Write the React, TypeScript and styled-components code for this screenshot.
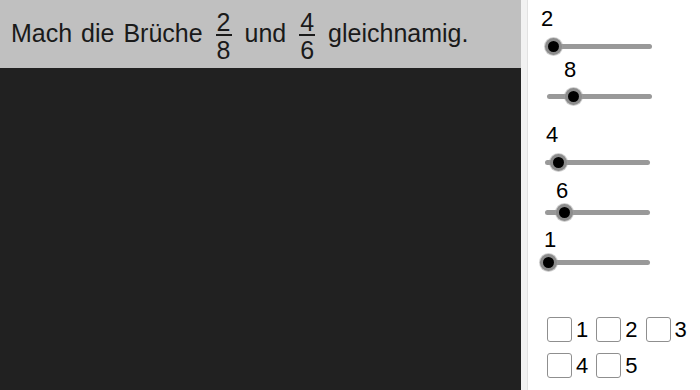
import React from "react";
import styled, { createGlobalStyle } from "styled-components";

const GlobalStyle = createGlobalStyle`
  html, body {
    margin: 0;
    padding: 0;
    background: #ffffff;
  }
  body {
    font-family: "Liberation Sans", Arial, sans-serif;
  }
`;

const sliders = [
  { value: "2", top: 8, labelX: 13, gap: 7, trackX: 20, width: 104, knob: 5 },
  { value: "8", top: 4, labelX: 36, gap: 6, trackX: 19, width: 105, knob: 26 },
  { value: "4", top: 19, labelX: 18, gap: 7, trackX: 17, width: 105, knob: 13 },
  { value: "6", top: 9, labelX: 28, gap: 1, trackX: 17, width: 105, knob: 19 },
  { value: "1", top: 8, labelX: 16, gap: 2, trackX: 12, width: 110, knob: 8 },
];

const boxRows = [
  ["1", "2", "3"],
  ["4", "5"],
];

const Fraction = ({ num, den }: { num: string; den: string }) => (
  <Frac>
    <Num>{num}</Num>
    <Bar />
    <Den>{den}</Den>
  </Frac>
);

const App = () => {
  return (
    <Page>
      <GlobalStyle />
      <GraphicsView>
        <TaskBar>
          <TaskText>
            Mach die Brüche <Fraction num="2" den="8" /> und{" "}
            <Fraction num="4" den="6" /> gleichnamig.
          </TaskText>
        </TaskBar>
        <Canvas />
      </GraphicsView>
      <Splitter />
      <SidePanel>
        {sliders.map((s) => (
          <SliderBlock key={s.value + s.top} $top={s.top}>
            <SliderLabel $x={s.labelX}>{s.value}</SliderLabel>
            <TrackRow $x={s.trackX} $w={s.width} $gap={s.gap}>
              <Track />
              <Knob $at={s.knob} />
            </TrackRow>
          </SliderBlock>
        ))}
        <BoxGrid>
          {boxRows.map((row, i) => (
            <BoxRow key={i}>
              {row.map((n) => (
                <BoxItem key={n}>
                  <Box />
                  <BoxLabel>{n}</BoxLabel>
                </BoxItem>
              ))}
            </BoxRow>
          ))}
        </BoxGrid>
      </SidePanel>
    </Page>
  );
};

export default App;

const Page = styled.div`
  display: flex;
  width: 700px;
  height: 390px;
  overflow: hidden;
`;

const GraphicsView = styled.div`
  width: 521px;
  display: flex;
  flex-direction: column;
`;

const TaskBar = styled.div`
  height: 68px;
  background: #c0c0c0;
  display: flex;
  align-items: center;
  padding: 4px 0 0 11px;
  box-sizing: border-box;
`;

const TaskText = styled.div`
  font-family: "Liberation Sans", Arial, sans-serif;
  font-size: 25px;
  line-height: 30px;
  word-spacing: 2px;
  color: #1a1a1a;
  white-space: nowrap;
`;

const Frac = styled.span`
  display: inline-flex;
  flex-direction: column;
  align-items: center;
  vertical-align: middle;
  margin: 0 4px;
`;

const Num = styled.span`
  line-height: 20px;
  margin-bottom: 2px;
`;

const Den = styled.span`
  line-height: 20px;
  margin-top: 4px;
`;

const Bar = styled.span`
  display: block;
  width: 16px;
  height: 1.5px;
  background: #1a1a1a;
`;

const Canvas = styled.div`
  flex: 1;
  background: #212121;
`;

const Splitter = styled.div`
  width: 6px;
  background: #f2f2f2;
  border-right: 1px solid #e2e2e2;
`;

const SidePanel = styled.div`
  flex: 1;
  display: flex;
  flex-direction: column;
  background: #fff;
  font-family: "Liberation Sans", Arial, sans-serif;
  color: #000;
`;

const SliderBlock = styled.div<{ $top: number }>`
  margin-top: ${(p) => p.$top}px;
  display: flex;
  flex-direction: column;
`;

const SliderLabel = styled.div<{ $x: number }>`
  font-size: 22px;
  line-height: 22px;
  padding-left: ${(p) => p.$x}px;
`;

const TrackRow = styled.div<{ $x: number; $w: number; $gap: number }>`
  position: relative;
  margin-top: ${(p) => p.$gap}px;
  margin-left: ${(p) => p.$x}px;
  width: ${(p) => p.$w}px;
  height: 18px;
  display: flex;
  align-items: center;
`;

const Track = styled.div`
  flex: 1;
  height: 5px;
  border-radius: 2.5px;
  background: #999999;
`;

const Knob = styled.div<{ $at: number }>`
  position: absolute;
  top: 50%;
  left: ${(p) => p.$at}px;
  width: 11px;
  height: 11px;
  margin: -5.5px 0 0 -5.5px;
  border-radius: 50%;
  background: #000;
  box-shadow: 0 0 0 3px #8c8c8c, 0 0 0 4px rgba(160, 160, 160, 0.5);
`;

const BoxGrid = styled.div`
  margin-top: 46px;
  padding-left: 19px;
  display: flex;
  flex-direction: column;
  gap: 11px;
`;

const BoxRow = styled.div`
  display: flex;
  gap: 8px;
`;

const BoxItem = styled.div`
  display: flex;
  align-items: center;
  gap: 4px;
`;

const Box = styled.div`
  width: 25px;
  height: 25px;
  box-sizing: border-box;
  border: 1.5px solid #8f8f8f;
  border-radius: 3px;
  background: #fff;
`;

const BoxLabel = styled.span`
  font-size: 22px;
  line-height: 22px;
`;
